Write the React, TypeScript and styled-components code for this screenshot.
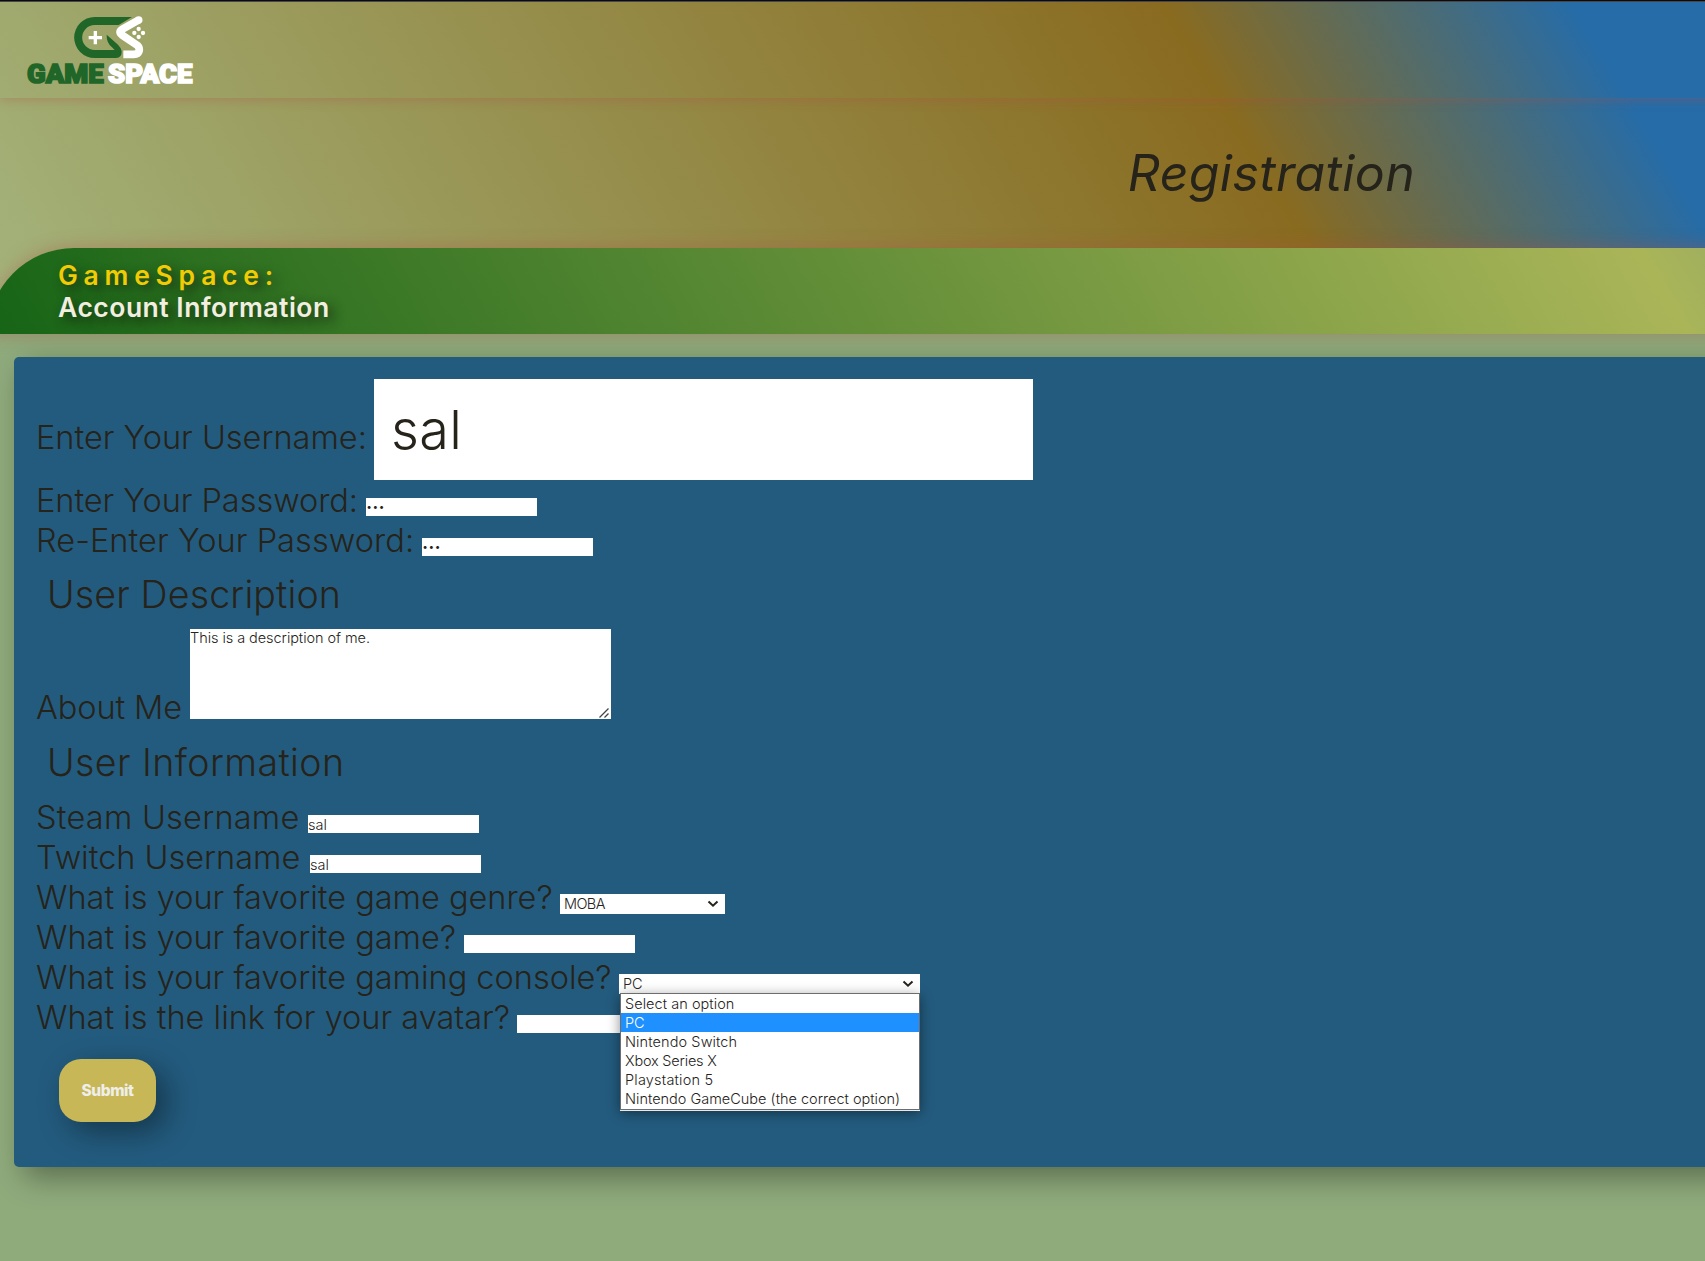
import React from "react";
import styled, { createGlobalStyle } from "styled-components";

const ink = "#25231a";

const GlobalStyle = createGlobalStyle`
  * { box-sizing: border-box; }
  html, body { margin: 0; padding: 0; }
  body {
    background: #8fab7c;
    color: ${ink};
    font-family: Inter, "Liberation Sans", sans-serif;
    font-weight: 300;
    overflow: hidden;
  }
`;

const Viewport = styled.div`
  width: 100%;
  height: 1261px;
  overflow: hidden;
`;

const Page = styled.div`
  width: 2543px;
  display: flex;
  flex-direction: column;
`;

const TopEdge = styled.div`
  position: relative;
  z-index: 1;
  height: 2px;
  background: #0b0b0d;
  border-bottom: 1px solid #47474b;
`;

const Header = styled.header`
  height: 332px;
  display: flex;
  flex-direction: column;
  background: linear-gradient(59deg, #a4b47c 0%, #896b20 49.7%, #256ca9 64.7%, #256ca9 100%);
`;

const Nav = styled.nav`
  height: 96px;
  padding: 10px 22px;
  box-shadow: 0 1px 11px rgba(172, 78, 68, 0.4);
`;

const Title = styled.h1`
  margin: 0;
  height: 150px;
  display: flex;
  align-items: center;
  justify-content: center;
  font-size: 50px;
  font-style: italic;
  font-weight: 400;
  letter-spacing: 0.4px;
`;

const Banner = styled.div`
  height: 86px;
  margin: 0 -12px;
  padding: 11px 0 0 70px;
  border-radius: 86px 86px 0 0;
  background: linear-gradient(60deg, #166416 0%, #aab558 65%, #256ca9 100%);
  box-shadow: 0 0 18px rgba(172, 78, 68, 0.42);
`;

const BannerLine = styled.div<{ $color: string; $spacing: number }>`
  font-size: 26.5px;
  line-height: 32px;
  font-weight: 600;
  color: ${(p) => p.$color};
  letter-spacing: ${(p) => p.$spacing}px;
  text-shadow: 5px 5px 12px rgba(20, 35, 15, 0.9);
`;

const Panel = styled.form`
  margin: 23px 14px 0;
  height: 810px;
  padding: 22px;
  border-radius: 5px;
  background: #235b7e;
  box-shadow: 10px 10px 30px rgba(0, 0, 0, 0.38);
  display: flex;
  flex-direction: column;
  align-items: flex-start;
`;

const Row = styled.div<{ $height?: number }>`
  height: ${(p) => p.$height ?? 40}px;
  display: flex;
  align-items: flex-start;
`;

const Label = styled.label<{ $width: number; $spacing: number; $top?: number }>`
  width: ${(p) => p.$width}px;
  margin-top: ${(p) => p.$top ?? 0}px;
  font-size: 32.5px;
  line-height: 40px;
  font-weight: 280;
  white-space: nowrap;
  letter-spacing: ${(p) => p.$spacing}px;
`;

const Heading = styled.h2<{ $spacing: number; $before: number; $after: number }>`
  margin: ${(p) => p.$before}px 0 ${(p) => p.$after}px 11px;
  font-size: 37.5px;
  line-height: 46px;
  font-weight: 280;
  letter-spacing: ${(p) => p.$spacing}px;
`;

const Field = styled.input`
  width: 171px;
  height: 18px;
  margin: 17px 0 0;
  padding: 0;
  border: 0;
  border-radius: 0;
  outline: 0;
  background: #fff;
  color: ${ink};
  font: 300 14.5px Inter, "Liberation Sans", sans-serif;

  &[type="password"] {
    font-size: 11px;
  }
`;

const LargeField = styled(Field)`
  width: 659px;
  height: 101px;
  margin: 0;
  padding: 0 18px 0 17px;
  font-size: 54px;
  font-weight: 280;
  letter-spacing: 0.3px;
`;

const TextBox = styled.div`
  width: 421px;
  height: 90px;
  padding: 0 1px 0 0;
  background: #fff;
  font-size: 14.5px;
  line-height: 18px;
  letter-spacing: -0.06px;
  display: flex;
  justify-content: space-between;
`;

const ResizeGrip = styled.svg`
  width: 11px;
  height: 11px;
  align-self: flex-end;
  margin-bottom: 1px;
`;

const Select = styled.div<{ $width: number; $spacing: number }>`
  position: relative;
  width: ${(p) => p.$width}px;
  height: 20px;
  margin-top: 16px;
  padding: 0 6px 0 4px;
  background: #fff;
  display: flex;
  align-items: center;
  justify-content: space-between;
  font-size: 14.5px;
  line-height: 20px;
  letter-spacing: ${(p) => p.$spacing}px;
`;

const Menu = styled.ul`
  position: absolute;
  z-index: 2;
  top: 19px;
  left: 1px;
  width: 300px;
  height: 117px;
  margin: 0;
  padding: 0;
  list-style: none;
  background: #fff;
  border: 1px solid #6d6d6d;
  box-shadow: 0 1px 0 #e8e8e8, 0 3px 12px rgba(0, 0, 0, 0.45);
`;

const Option = styled.li<{ $spacing: number; $active?: boolean }>`
  height: 19px;
  padding-left: 4px;
  line-height: 19px;
  white-space: nowrap;
  letter-spacing: ${(p) => p.$spacing}px;
  background: ${(p) => (p.$active ? "#1e90ff" : "transparent")};
  color: ${(p) => (p.$active ? "#fff" : ink)};
`;

const Submit = styled.button`
  width: 97px;
  height: 63px;
  margin: 21px 0 0 23px;
  padding: 0;
  border: 0;
  border-radius: 22px;
  background: #c7b757;
  color: #eeeeea;
  font: 800 15.5px Inter, "Liberation Sans", sans-serif;
  letter-spacing: -0.4px;
  box-shadow: 10px 10px 30px rgba(0, 0, 0, 0.4);
`;

const LogoSvg = styled.svg`
  display: block;
  width: 176px;
  height: 78px;
`;

const Wordmark = styled.text`
  font-family: Roboto, sans-serif;
  font-weight: 900;
  font-size: 80px;
  stroke-width: 5px;
`;

const Logo = () => (
  <LogoSvg viewBox="0 0 528 234" aria-label="GameSpace">
    <g fill="#1f6628">
      <path d="M330 15 H218 A61.5 61.5 0 0 0 218 138 H282 Q300 138 299 118 Q298 108 288 98 L254 68 Q253 92 270 106 L278 114 H218 A37.5 37.5 0 0 1 218 39 H290 Z" />
      <Wordmark x="15" y="214" textLength="230" lengthAdjust="spacingAndGlyphs" stroke="#1f6628">GAME</Wordmark>
    </g>
    <path d="M350 24 L300 52 Q288 60 300 69 L346 100 Q354 108 351 118 Q348 127 336 127 H304" fill="none" stroke="#fff" strokeWidth="23" strokeLinejoin="round" />
    <g fill="#fff">
      <circle cx="350" cy="24" r="11.5" />
      <path d="M215 57 h10 v15 h15 v10 h-15 v15 h-10 v-15 h-15 v-10 h15 Z" />
      <circle cx="350" cy="51" r="6.5" />
      <circle cx="337" cy="63" r="6.5" />
      <circle cx="363" cy="63" r="6.5" />
      <circle cx="350" cy="75" r="6.5" />
      <Wordmark x="258" y="214" textLength="253" lengthAdjust="spacingAndGlyphs" stroke="#fff">SPACE</Wordmark>
    </g>
  </LogoSvg>
);

const Chevron = () => (
  <svg width="12" height="8" viewBox="0 0 12 8" fill="none" stroke={ink} strokeWidth="2">
    <path d="M1.5 1.5 L6 5.7 L10.5 1.5" />
  </svg>
);

const consoles: { name: string; spacing: number }[] = [
  { name: "Select an option", spacing: 0.05 },
  { name: "PC", spacing: -0.2 },
  { name: "Nintendo Switch", spacing: 0.1 },
  { name: "Xbox Series X", spacing: -0.2 },
  { name: "Playstation 5", spacing: 0.2 },
  { name: "Nintendo GameCube (the correct option)", spacing: 0 },
];

export default function App() {
  return (
    <Viewport>
      <GlobalStyle />
      <Page>
        <TopEdge />
        <Header>
          <Nav>
            <Logo />
          </Nav>
          <Title>Registration</Title>
          <Banner>
            <BannerLine $color="#f2cb05" $spacing={5.75}>GameSpace:</BannerLine>
            <BannerLine $color="#f3efe0" $spacing={0.5}>Account Information</BannerLine>
          </Banner>
        </Header>
        <Panel>
          <Row $height={102}>
            <Label $width={338} $spacing={0} $top={39}>Enter Your Username:</Label>
            <LargeField defaultValue="sal" />
          </Row>
          <Row>
            <Label $width={330} $spacing={-0.04}>Enter Your Password:</Label>
            <Field type="password" defaultValue="sal" />
          </Row>
          <Row>
            <Label $width={386} $spacing={0.07}>Re-Enter Your Password:</Label>
            <Field type="password" defaultValue="sal" />
          </Row>
          <Heading $spacing={0.18} $before={11} $after={11}>User Description</Heading>
          <Row $height={99}>
            <Label $width={154} $spacing={-0.1} $top={59}>About Me</Label>
            <TextBox>
              This is a description of me.
              <ResizeGrip viewBox="0 0 11 11" stroke="#444" strokeWidth="1.3">
                <path d="M0.5 10.5 L9.5 1.5 M5.5 10.5 L9.5 6.5" />
              </ResizeGrip>
            </TextBox>
          </Row>
          <Heading $spacing={0.45} $before={12} $after={12}>User Information</Heading>
          <Row>
            <Label $width={272} $spacing={0.24}>Steam Username</Label>
            <Field defaultValue="sal" />
          </Row>
          <Row>
            <Label $width={274} $spacing={0}>Twitch Username</Label>
            <Field defaultValue="sal" />
          </Row>
          <Row>
            <Label $width={524} $spacing={0}>What is your favorite game genre?</Label>
            <Select $width={165} $spacing={-0.6}>
              MOBA
              <Chevron />
            </Select>
          </Row>
          <Row>
            <Label $width={428} $spacing={0}>What is your favorite game?</Label>
            <Field />
          </Row>
          <Row>
            <Label $width={583} $spacing={0}>What is your favorite gaming console?</Label>
            <Select $width={301} $spacing={-0.2}>
              PC
              <Chevron />
              <Menu>
                {consoles.map((c) => (
                  <Option key={c.name} $spacing={c.spacing} $active={c.name === "PC"}>
                    {c.name}
                  </Option>
                ))}
              </Menu>
            </Select>
          </Row>
          <Row>
            <Label $width={481} $spacing={0}>What is the link for your avatar?</Label>
            <Field />
          </Row>
          <Submit type="button">Submit</Submit>
        </Panel>
      </Page>
    </Viewport>
  );
}
